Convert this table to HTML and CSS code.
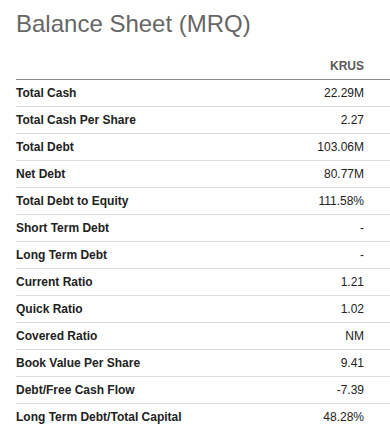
FILE: index.html
```html
<!DOCTYPE html>
<html lang="en">
<head>
<meta charset="utf-8">
<title>Balance Sheet (MRQ)</title>
<link rel="stylesheet" href="styles.css">
</head>
<body>
<section class="panel">
  <h2 class="title">Balance Sheet (MRQ)</h2>
  <table class="sheet">
    <thead>
      <tr><th class="label-head"></th><th class="value-head">KRUS</th></tr>
    </thead>
    <tbody>
      <tr><td class="label">Total Cash</td><td class="value">22.29M</td></tr>
      <tr><td class="label">Total Cash Per Share</td><td class="value">2.27</td></tr>
      <tr><td class="label">Total Debt</td><td class="value">103.06M</td></tr>
      <tr><td class="label">Net Debt</td><td class="value">80.77M</td></tr>
      <tr><td class="label">Total Debt to Equity</td><td class="value">111.58%</td></tr>
      <tr><td class="label">Short Term Debt</td><td class="value">-</td></tr>
      <tr><td class="label">Long Term Debt</td><td class="value">-</td></tr>
      <tr><td class="label">Current Ratio</td><td class="value">1.21</td></tr>
      <tr><td class="label">Quick Ratio</td><td class="value">1.02</td></tr>
      <tr><td class="label">Covered Ratio</td><td class="value">NM</td></tr>
      <tr><td class="label">Book Value Per Share</td><td class="value">9.41</td></tr>
      <tr><td class="label">Debt/Free Cash Flow</td><td class="value">-7.39</td></tr>
      <tr><td class="label">Long Term Debt/Total Capital</td><td class="value">48.28%</td></tr>
    </tbody>
  </table>
</section>
</body>
</html>
```
FILE: styles.css
```css
html, body {
  margin: 0;
  padding: 0;
  background: #ffffff;
}

.panel {
  padding: 10px 0 0 16px;
  font-family: "Liberation Sans", Arial, sans-serif;
}

.title {
  margin: 0;
  font-size: 24px;
  line-height: 28px;
  font-weight: normal;
  color: #666666;
}

.sheet {
  width: 100%;
  border-collapse: separate;
  border-spacing: 0;
  font-size: 12px;
}

.sheet th {
  padding: 21px 0 6px 0;
  line-height: 14px;
  border-bottom: 1px solid #8a8a8a;
  font-weight: bold;
  color: #5a5a5a;
}

.value-head {
  text-align: right;
  padding-right: 26px !important;
}

.sheet td {
  padding: 0;
  line-height: 26px;
  border-bottom: 1px solid #dddddd;
  color: #222222;
  white-space: nowrap;
}

.sheet tbody tr:last-child td {
  border-bottom: none;
}

.label {
  font-weight: bold;
  text-align: left;
}

.value {
  text-align: right;
  padding-right: 26px !important;
}
```
